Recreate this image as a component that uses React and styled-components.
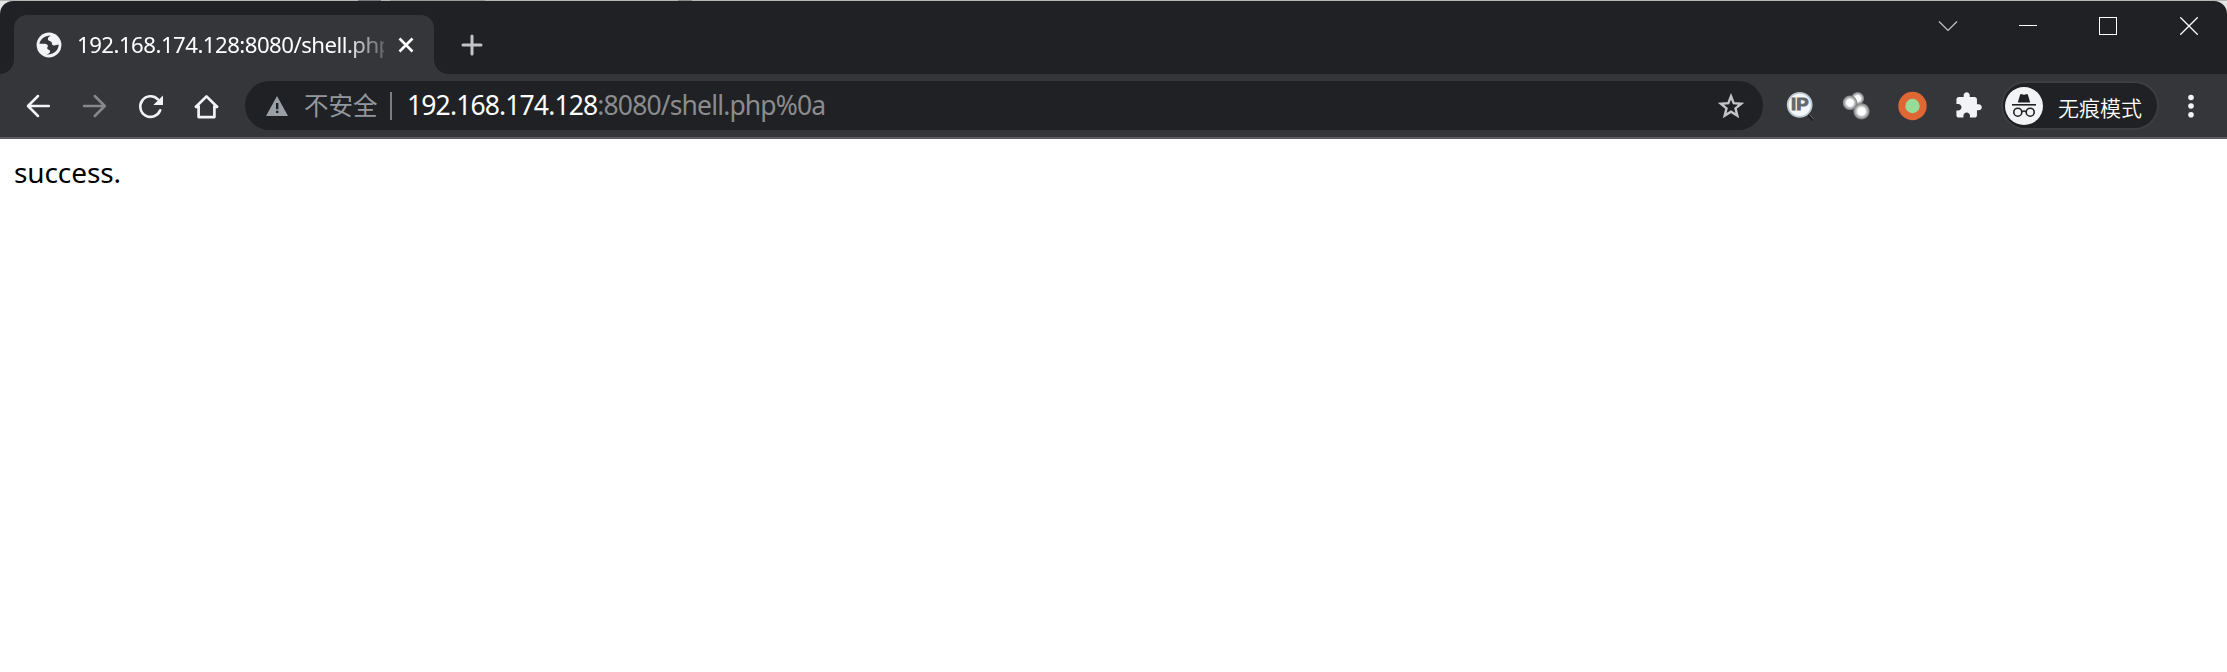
import React from "react";
import styled, { createGlobalStyle } from "styled-components";

const Global = createGlobalStyle`
  * { box-sizing: border-box; }
  body { margin: 0; background: #fff; }
`;

const latin = `"Noto Sans", "Open Sans", "Noto Sans CJK SC", sans-serif`;
const cjk = `"Noto Sans CJK SC", "Noto Sans", sans-serif`;

const Window = styled.div`
  width: 2227px;
  height: 672px;
  overflow: hidden;
  display: flex;
  flex-direction: column;
  font-family: ${latin};
  background: #fff;
`;

const Backdrop = styled.div`
  flex: none;
  height: 74px;
  padding-top: 1px;
  background: linear-gradient(90deg, #b2b8b4 0 358px, #777c7a 358px 381px, #b2b8b4 381px 390px, #969b98 390px 485px, #b2b8b4 485px 678px, #858b87 678px 692px, #b2b8b4 692px) 0 0 / 100% 1px no-repeat, #e4e6e5;
`;

const TitleBar = styled.div`
  height: 73px;
  display: flex;
  align-items: flex-end;
  background: #202124;
  border-radius: 13px 13px 0 0;
`;

const Tab = styled.div`
  width: 420px;
  height: 59px;
  margin-left: 14px;
  padding-left: 22px;
  display: flex;
  align-items: center;
  position: relative;
  background: #35363a;
  border-radius: 13px 13px 0 0;

  &::before,
  &::after {
    content: "";
    position: absolute;
    bottom: 0;
    width: 14px;
    height: 14px;
  }
  &::before {
    right: 100%;
    background: radial-gradient(circle at 0 0, transparent 13.5px, #35363a 14.2px);
  }
  &::after {
    left: 100%;
    background: radial-gradient(circle at 100% 0, transparent 13.5px, #35363a 14.2px);
  }
`;

const TabTitle = styled.div`
  width: 307px;
  height: 40px;
  margin-left: 15px;
  line-height: 40px;
  overflow: hidden;
  white-space: nowrap;
  font-size: 22.2px;
  letter-spacing: -0.52px;
  color: #fff;
  mask-image: linear-gradient(90deg, #000 268px, transparent 318px);
`;

const TabClose = styled.div`
  display: flex;
  margin-left: 13px;
`;

const NewTab = styled.div`
  display: flex;
  width: 49px;
  height: 59px;
  margin-left: 13px;
  align-items: center;
  justify-content: center;
`;

const Controls = styled.div`
  display: flex;
  align-self: flex-start;
  margin: 0 -2px 0 auto;
`;

const Control = styled.div`
  width: 80.4px;
  height: 50px;
  display: flex;
  align-items: center;
  justify-content: center;
`;

const Toolbar = styled.div`
  flex: none;
  height: 65px;
  display: flex;
  align-items: center;
  padding-left: 10px;
  background: #35363a;
  border-bottom: 2px solid #5c5d61;
`;

const NavButton = styled.div`
  width: 56px;
  height: 56px;
  display: flex;
  align-items: center;
  justify-content: center;
`;

const Omnibox = styled.div`
  width: 1518px;
  height: 49px;
  margin-left: 11px;
  padding: 0 18px 0 20px;
  display: flex;
  align-items: center;
  border-radius: 25px;
  background: #202124;
`;

const Security = styled.div`
  width: 86px;
  margin: -2px 0 0 15px;
  font: 400 24.5px/40px ${cjk};
  color: #92989e;
  white-space: nowrap;
`;

const Divider = styled.div`
  width: 2px;
  height: 28px;
  background: #7b7d81;
`;

const Url = styled.div`
  margin: -2px 0 0 15px;
  font-size: 26.5px;
  line-height: 40px;
  letter-spacing: -0.86px;
  white-space: nowrap;
  color: #8b8c8e;
`;

const Host = styled.span`
  color: #fff;
`;

const Star = styled.div`
  display: flex;
  margin-left: auto;
`;

const Extensions = styled.div`
  display: flex;
  margin: 0 0 0 9px;
`;

const IncognitoChip = styled.div`
  width: 158px;
  height: 49px;
  margin-left: 5px;
  padding-left: 2px;
  display: flex;
  align-items: center;
  border: 2px solid #3d3e42;
  border-radius: 25px;
  background: #202124;
`;

const ChipLabel = styled.div`
  margin: 2px 0 0 15px;
  font: 350 21px/30px ${cjk};
  color: #fff;
  white-space: nowrap;
`;

const MenuButton = styled.div`
  display: flex;
  margin-left: 18px;
`;

const Page = styled.main`
  flex: 1;
  padding: 14px;
  font-size: 28px;
  line-height: 38px;
  letter-spacing: -0.1px;
  color: #000;
`;

const Icon = ({ size = 28, children, ...rest }) => (
  <svg width={size} height={size} viewBox={`0 0 ${size} ${size}`} fill="none" {...rest}>
    {children}
  </svg>
);

const Globe = () => (
  <Icon size={26}>
    <circle cx="13" cy="13" r="12.4" fill="#f1f3f4" />
    <path
      d="M3.400 11.800C4.200 7.400 8.400 3.500 14.600 3.500c-1.700 1.200-3.200 2.400-2.600 4.200.4 1.500 2.900 1 3.600 2.500.6 1.500.1 3.100 2.200 3.200 1.700.1 3.200-.6 4.800-.8.300 5.200-4.200 10.400-12.400 9.800 2.600-.4 4-1.700 3.900-3.200-.1-1.400-2.700-1.100-2.900-2.600-.1-1.300 1.200-2 .4-3.500-1.200-1.900-4.400-1.200-8.200-1.300z"
      fill="#35363a"
    />
  </Icon>
);

const Back = () => (
  <Icon stroke="#f1f3f4" strokeWidth="2.5" strokeLinecap="round" strokeLinejoin="round">
    <path d="M24.800 14H4.200M14 4L4 14l10 10" />
  </Icon>
);

const Forward = () => (
  <Icon stroke="#87888b" strokeWidth="2.5" strokeLinecap="round" strokeLinejoin="round">
    <path d="M4 14H24.600M14.800 4l10 10-10 10" />
  </Icon>
);

const Reload = () => (
  <Icon>
    <path d="M21.900 7.300A10.300 10.300 0 1 0 24.200 18.300" stroke="#f1f3f4" strokeWidth="2.600" strokeLinecap="round" />
    <path d="M27 3.400v9.600h-9.700z" fill="#f1f3f4" />
  </Icon>
);

const Home = () => (
  <Icon stroke="#f1f3f4" strokeWidth="2.700" strokeLinejoin="round" strokeLinecap="round">
    <path d="M4 14.800L14.500 4.400 25 14.800M6.600 14.600v10.500h15.800V14.600" />
    <path d="M4 14.800h2.600M22.400 14.800H25" />
  </Icon>
);

const Warning = () => (
  <svg width="24" height="22" viewBox="0 0 24 22">
    <path d="M12 1L23 21H1z" fill="#9aa0a6" />
    <path d="M11 8h2.4v6.3H11zM11 15.7h2.4v2.4H11z" fill="#202124" />
  </svg>
);

const Bookmark = () => (
  <Icon stroke="#c3c4c5" strokeWidth="2.400">
    <path d="M14 4.300l2.700 6.800 7.500.6-5.700 4.700 1.800 7.200-6.300-3.900-6.300 3.900 1.800-7.200-5.700-4.700 7.500-.6z" />
  </Icon>
);

const IpText = styled.text`
  font: 900 16px "Liberation Sans", sans-serif;
  fill: #66696b;
  stroke: #66696b;
  stroke-width: 0.9px;
`;

const IpLookup = () => (
  <Icon size={32}>
    <path d="M24 24l5.500 6" stroke="#1c1d1f" strokeWidth="3" />
    <path d="M25.500 24.500l4.500 5" stroke="#77797b" strokeWidth="1" />
    <circle cx="15.700" cy="14.800" r="12" fill="#f5f8f9" stroke="#b9c7d0" strokeWidth="1.800" />
    <IpText x="7" y="20.400" textLength="17.600" lengthAdjust="spacingAndGlyphs">IP</IpText>
  </Icon>
);

const Orbs = () => (
  <Icon size={32}>
    <defs>
      <radialGradient id="orb">
        <stop offset="0.420" stopColor="#fff" />
        <stop offset="0.620" stopColor="#c4c4c5" />
        <stop offset="0.880" stopColor="#858688" />
        <stop offset="1" stopColor="#858688" stopOpacity="0" />
      </radialGradient>
    </defs>
    <circle cx="17.600" cy="8.500" r="6.800" fill="url(#orb)" />
    <circle cx="10" cy="12.800" r="7.700" fill="url(#orb)" />
    <circle cx="21.500" cy="21.300" r="8.600" fill="url(#orb)" />
  </Icon>
);

const Ring = () => (
  <Icon size={32}>
    <circle cx="16.500" cy="16" r="14.200" fill="#df6734" />
    <circle cx="16.500" cy="16" r="7.200" fill="#98dc9a" />
  </Icon>
);

const Puzzle = () => (
  <svg width="29" height="29" viewBox="0 0 24 24">
    <path
      fill="#f1f3f4"
      d="M20.500 11H19V7c0-1.100-.9-2-2-2h-4V3.500C13 2.120 11.880 1 10.500 1S8 2.120 8 3.500V5H4c-1.100 0-1.990.9-1.990 2v3.800H3.500c1.490 0 2.700 1.210 2.700 2.700s-1.210 2.700-2.700 2.700H2V20c0 1.100.9 2 2 2h3.800v-1.500c0-1.490 1.210-2.700 2.700-2.700 1.490 0 2.700 1.210 2.700 2.700V22H17c1.100 0 2-.9 2-2v-4h1.500c1.380 0 2.500-1.120 2.500-2.500S21.880 11 20.500 11z"
    />
  </svg>
);

const Incognito = () => (
  <Icon size={38}>
    <circle cx="19" cy="19" r="19" fill="#f1f3f4" />
    <path d="M12.800 15.600L15 8q.4-1.200 1.600-.8l2.400.6 2.400-.6q1.200-.4 1.600.8l2.200 7.600z" fill="#202124" />
    <path d="M7 17.800h24" stroke="#202124" strokeWidth="1.600" />
    <g stroke="#202124" strokeWidth="1.600">
      <circle cx="12.800" cy="25.200" r="4" />
      <circle cx="25.200" cy="25.200" r="4" />
      <path d="M16.800 24.700q2.200-1.300 4.400 0" />
    </g>
  </Icon>
);

export default function App() {
  return (
    <Window>
      <Global />
      <Backdrop>
        <TitleBar>
          <Tab>
            <Globe />
            <TabTitle>192.168.174.128:8080/shell.php%0a</TabTitle>
            <TabClose>
              <Icon size={18} stroke="#fff" strokeWidth="2.600">
                <path d="M2.500 2.500l13 13M15.500 2.500l-13 13" />
              </Icon>
            </TabClose>
          </Tab>
          <NewTab>
            <Icon size={22} stroke="#c3c4c9" strokeWidth="3" strokeLinecap="round">
              <path d="M11 2v18M2 11h18" />
            </Icon>
          </NewTab>
          <Controls>
            <Control>
              <Icon size={20} stroke="#c4c5c6" strokeWidth="1.200">
                <path d="M1 5.500l9 9 9-9" />
              </Icon>
            </Control>
            <Control>
              <Icon size={18} stroke="#fff" shapeRendering="crispEdges">
                <path d="M0 8.500h18" />
              </Icon>
            </Control>
            <Control>
              <Icon size={18} stroke="#fff" shapeRendering="crispEdges">
                <path d="M.5.5h17v17H.5z" />
              </Icon>
            </Control>
            <Control>
              <Icon size={18} stroke="#fff" strokeWidth="1.300">
                <path d="M.3.300l17.400 17.400M17.700.3L.3 17.700" />
              </Icon>
            </Control>
          </Controls>
        </TitleBar>
      </Backdrop>
      <Toolbar>
        <NavButton><Back /></NavButton>
        <NavButton><Forward /></NavButton>
        <NavButton><Reload /></NavButton>
        <NavButton><Home /></NavButton>
        <Omnibox>
          <Warning />
          <Security>不安全</Security>
          <Divider />
          <Url><Host>192.168.174.128</Host>:8080/shell.php%0a</Url>
          <Star><Bookmark /></Star>
        </Omnibox>
        <Extensions>
          <NavButton><IpLookup /></NavButton>
          <NavButton><Orbs /></NavButton>
          <NavButton><Ring /></NavButton>
          <NavButton><Puzzle /></NavButton>
        </Extensions>
        <IncognitoChip>
          <Incognito />
          <ChipLabel>无痕模式</ChipLabel>
        </IncognitoChip>
        <MenuButton>
          <Icon>
            <circle cx="14" cy="5.500" r="2.800" fill="#f1f3f4" />
            <circle cx="14" cy="14" r="2.800" fill="#f1f3f4" />
            <circle cx="14" cy="22.700" r="2.800" fill="#f1f3f4" />
          </Icon>
        </MenuButton>
      </Toolbar>
      <Page>success.</Page>
    </Window>
  );
}
